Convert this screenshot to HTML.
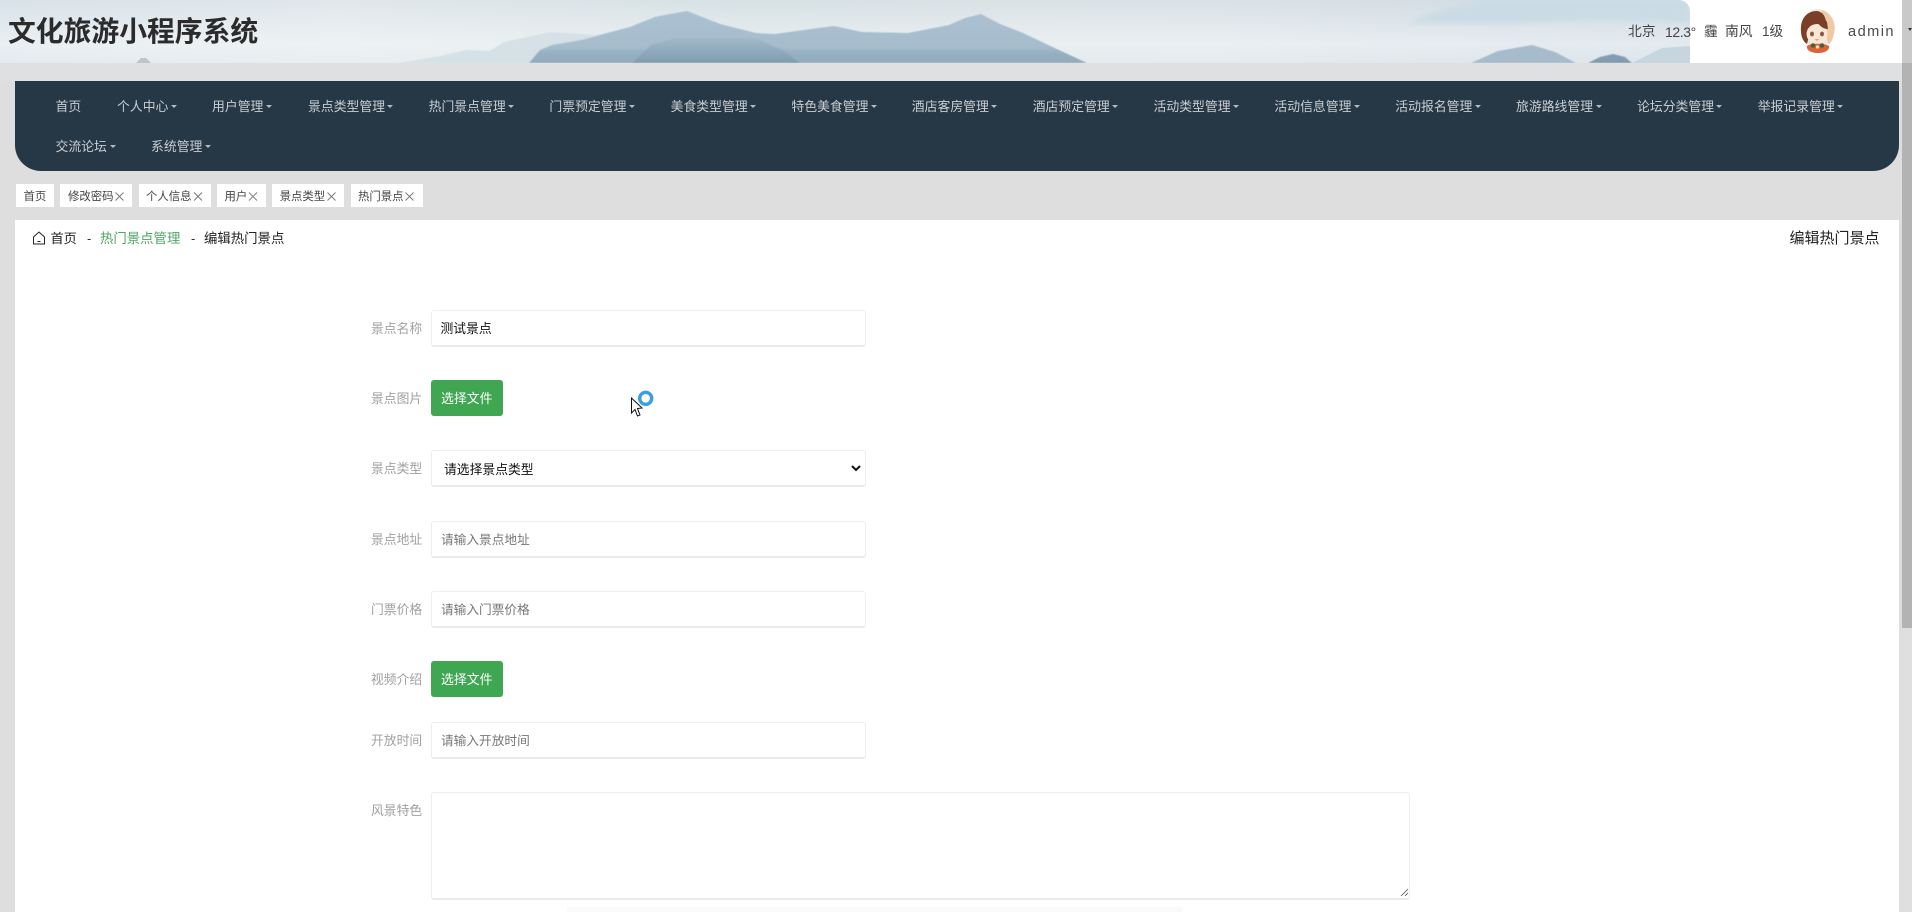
<!DOCTYPE html>
<html lang="zh-CN">
<head>
<meta charset="utf-8">
<title>文化旅游小程序系统</title>
<style>
html,body{margin:0;padding:0;width:1912px;height:912px;overflow:hidden;background:#dedede;font-family:"Liberation Sans","Noto Sans CJK SC",sans-serif;}
.a{position:absolute;white-space:nowrap;}
.t{position:absolute;white-space:nowrap;line-height:20px;height:20px;}
.n{color:#c8ced3;font-size:12.85px;top:97px;}
.r2{top:137px;}
.c{position:absolute;top:105px;width:0;height:0;border-left:3px solid transparent;border-right:3px solid transparent;border-top:3px solid #b4bbc1;}
.tab{position:absolute;top:184px;height:23px;background:#fff;}
.tt{color:#444;font-size:11.4px;top:187px;}
.lb{color:#a0a0a0;font-size:12.8px;left:371px;}
.in{position:absolute;left:431px;width:433px;height:34px;border:1px solid #eeeeee;border-bottom:2px solid #ebebeb;border-radius:3px;background:#fff;box-sizing:content-box;}
.ph{color:#777;font-size:12.7px;left:441px;}
.btn{position:absolute;left:431px;width:72px;height:36px;background:#3fa652;border-radius:3px;}
.bt{color:#fff;font-size:12.9px;left:441px;}
</style>
</head>
<body>
<div class="a" style="left:0;top:0;width:1912px;height:912px;background:#dedede;"></div>
<!-- banner -->
<svg class="a" style="left:0;top:0;" width="1690" height="63" viewBox="0 0 1690 63">
<defs>
<linearGradient id="bgv" x1="0" y1="0" x2="0" y2="1"><stop offset="0" stop-color="#fff" stop-opacity="0"/><stop offset="0.7" stop-color="#fff" stop-opacity="0.45"/><stop offset="1" stop-color="#fff" stop-opacity="0.3"/></linearGradient>
<linearGradient id="bgh" x1="0" y1="0" x2="1" y2="0"><stop offset="0" stop-color="#d8e2e9"/><stop offset="0.2" stop-color="#e0e7eb"/><stop offset="0.45" stop-color="#d6e1e4"/><stop offset="0.6" stop-color="#dae2e6"/><stop offset="0.72" stop-color="#d9e2e7"/><stop offset="0.85" stop-color="#d3dde4"/><stop offset="1" stop-color="#cddae3"/></linearGradient>
<linearGradient id="m1" x1="0" y1="0" x2="0" y2="1"><stop offset="0" stop-color="#abc0d0"/><stop offset="0.68" stop-color="#a6bdcd"/><stop offset="0.82" stop-color="#96afc0"/><stop offset="1" stop-color="#93acbe"/></linearGradient>
<linearGradient id="m2" x1="0" y1="0" x2="0" y2="1"><stop offset="0" stop-color="#a1bac9"/><stop offset="1" stop-color="#7f9cb0"/></linearGradient>
<filter id="b1"><feGaussianBlur stdDeviation="3"/></filter>
<filter id="b2"><feGaussianBlur stdDeviation="0.6"/></filter>
</defs>
<rect width="1690" height="63" fill="url(#bgh)"/>
<rect width="1690" height="63" fill="url(#bgv)"/>
<polygon points="1406,23 1440,10 1483,0 1690,0 1690,22 1600,20 1500,24" fill="#cbdbe5" filter="url(#b1)"/>
<polygon points="1632,63 1662,48 1690,46 1690,63" fill="#c7d5de"/>
<polygon points="136,63 141,58 146,58 151,63" fill="#b9c7cd"/>
<polygon points="400,63 440,56 467,50 490,51 504,42 550,32 596,35 640,25 640,63" fill="#d5e1e6" filter="url(#b2)"/>
<g filter="url(#b2)">
<polygon points="529,63 540,50 552,45 582,40 630,27 655,17 670,14 687,11 720,24 756,33 775,34 811,29 834,26 862,32 908,33 949,25 965,18 981,14 1000,24 1023,33 1059,50 1087,63" fill="url(#m1)"/>
<polygon points="632,63 651,45 674,38 756,38 782,50 800,63" fill="url(#m2)"/>
<polygon points="1471,63 1498,51 1532,45 1555,52 1576,63" fill="#a6bccd"/>
<polygon points="1588,63 1600,57 1613,54 1625,57 1632,63" fill="#839cb0"/>
</g>
</svg>
<!-- header right -->
<div class="a" style="left:1690px;top:0;width:212px;height:63px;background:#fff;"></div>
<svg class="a" style="left:1678px;top:0;" width="12" height="12"><path d="M2 0 Q12 2 12 12 L12 0Z" fill="#fff"/></svg>
<div class="a" style="left:0;top:63px;width:1902px;height:18px;background:#dfe0e2;"></div>
<div class="t" style="left:8px;top:12px;font-size:27.8px;line-height:40px;height:40px;font-weight:bold;color:#2b2b2b;">文化旅游小程序系统</div>
<div class="t" style="left:1628px;top:21.5px;font-size:13.8px;color:#444;">北京</div>
<div class="t" style="left:1665px;top:21.5px;font-size:14px;color:#444;letter-spacing:-.4px;">12.3°</div>
<div class="t" style="left:1704px;top:21.5px;font-size:13.6px;color:#444;">霾</div>
<div class="t" style="left:1725px;top:21.5px;font-size:13.8px;color:#444;">南风</div>
<div class="t" style="left:1762px;top:21.5px;font-size:13.6px;color:#444;">1级</div>
<svg class="a" style="left:1797px;top:8px;" width="42" height="46" viewBox="0 0 42 46">
<ellipse cx="21" cy="20" rx="17" ry="19" fill="#efe6dc"/>
<path d="M24 2 C34 5 39 14 37 25 C36 32 33 36 31 36 L28 18 Z" fill="#f0c8a4"/>
<path d="M20 3 C9 3 3 12 4 23 C4 30 7 34 10 36 L12 28 L30 19 C29 10 27 4 20 3Z" fill="#7a3f25"/>
<ellipse cx="20" cy="26" rx="10.500" ry="10" fill="#f9e6d5"/>
<path d="M9 25 C11 17 16 14 21 15 C23 18 26 21 31 21 L30 14 C26 8 12 8 9 18Z" fill="#7a3f25"/>
<ellipse cx="15" cy="26" rx="2" ry="2.400" fill="#8a5a44"/><ellipse cx="25" cy="26" rx="2" ry="2.400" fill="#8a5a44"/>
<path d="M18.500 31.500 q1.500 1 3 0" stroke="#c46c50" fill="none" stroke-width=".8"/>
<path d="M10 38 C13 35 28 35 32 38 C33 42 28 45 21 45 C14 45 9 42 10 38Z" fill="#dc6238"/>
<circle cx="16" cy="37.500" r="2.300" fill="#48603f"/><circle cx="25" cy="37.500" r="2.300" fill="#48603f"/>
<circle cx="20.500" cy="39" r="1.600" fill="#f2e4c8"/>
</svg>
<div class="t" style="left:1848px;top:21.5px;font-size:14.6px;color:#4a4a4a;letter-spacing:1.450px;">admin</div>
<!-- nav -->
<div class="a" style="left:15px;top:81px;width:1884px;height:90px;background:#263745;border-radius:0 0 26px 26px;"></div>
<div class="t n" style="left:55.500px;">首页</div>
<div class="t n" style="left:117px;">个人中心</div><i class="c" style="left:170.500px;"></i>
<div class="t n" style="left:212px;">用户管理</div><i class="c" style="left:265.500px;"></i>
<div class="t n" style="left:308px;">景点类型管理</div><i class="c" style="left:387px;"></i>
<div class="t n" style="left:428.600px;">热门景点管理</div><i class="c" style="left:508px;"></i>
<div class="t n" style="left:549.400px;">门票预定管理</div><i class="c" style="left:629px;"></i>
<div class="t n" style="left:670.600px;">美食类型管理</div><i class="c" style="left:750px;"></i>
<div class="t n" style="left:791.400px;">特色美食管理</div><i class="c" style="left:871px;"></i>
<div class="t n" style="left:911.800px;">酒店客房管理</div><i class="c" style="left:991px;"></i>
<div class="t n" style="left:1032.700px;">酒店预定管理</div><i class="c" style="left:1112px;"></i>
<div class="t n" style="left:1153.500px;">活动类型管理</div><i class="c" style="left:1233px;"></i>
<div class="t n" style="left:1274.400px;">活动信息管理</div><i class="c" style="left:1354px;"></i>
<div class="t n" style="left:1395.300px;">活动报名管理</div><i class="c" style="left:1475px;"></i>
<div class="t n" style="left:1516px;">旅游路线管理</div><i class="c" style="left:1596px;"></i>
<div class="t n" style="left:1637px;">论坛分类管理</div><i class="c" style="left:1716px;"></i>
<div class="t n" style="left:1757.700px;">举报记录管理</div><i class="c" style="left:1837px;"></i>
<div class="t n r2" style="left:55.500px;">交流论坛</div><i class="c" style="left:109.500px;top:145px;"></i>
<div class="t n r2" style="left:151px;">系统管理</div><i class="c" style="left:205px;top:145px;"></i>
<!-- tabs -->
<div class="tab" style="left:15.500px;width:38.500px;"></div>
<div class="tab" style="left:60px;width:72px;"></div>
<div class="tab" style="left:139px;width:72px;"></div>
<div class="tab" style="left:217px;width:49px;"></div>
<div class="tab" style="left:272px;width:72px;"></div>
<div class="tab" style="left:351px;width:72px;"></div>
<div class="t tt" style="left:23.500px;">首页</div>
<div class="t tt" style="left:68px;">修改密码</div>
<div class="t tt" style="left:146px;">个人信息</div>
<div class="t tt" style="left:224.500px;">用户</div>
<div class="t tt" style="left:279.600px;">景点类型</div>
<div class="t tt" style="left:358px;">热门景点</div>
<svg class="a" style="left:0;top:190px;" width="430" height="12" fill="none" stroke="#777" stroke-width="0.9">
<path d="M115.500 2.500 L123.500 10.500 M123.500 2.500 L115.500 10.500"/>
<path d="M194 2.500 L202 10.500 M202 2.500 L194 10.500"/>
<path d="M249 2.500 L257 10.500 M257 2.500 L249 10.500"/>
<path d="M327.500 2.500 L335.500 10.500 M335.500 2.500 L327.500 10.500"/>
<path d="M405.500 2.500 L413.500 10.500 M413.500 2.500 L405.500 10.500"/>
</svg>
<!-- card -->
<div class="a" style="left:15px;top:220px;width:1884px;height:692px;background:#fff;"></div>
<svg class="a" style="left:32px;top:231px;" width="14" height="14" viewBox="0 0 14 14" fill="none" stroke="#222" stroke-width="1"><path d="M1.500 6 L7 1 L12.500 6 V13 H1.500Z"/><path d="M5.500 10.500 H8.500"/></svg>
<div class="t" style="left:50.500px;top:229px;font-size:13.2px;color:#222;">首页</div>
<div class="t" style="left:87px;top:229px;font-size:13px;color:#333;">-</div>
<div class="t" style="left:100px;top:229px;font-size:13.400px;color:#4fa562;">热门景点管理</div>
<div class="t" style="left:191px;top:229px;font-size:13px;color:#333;">-</div>
<div class="t" style="left:204px;top:229px;font-size:13.400px;color:#222;">编辑热门景点</div>
<div class="t" style="left:1789.500px;top:229px;font-size:15px;color:#222;">编辑热门景点</div>
<!-- form -->
<div class="t lb" style="top:319px;">景点名称</div>
<div class="in" style="top:310px;"></div>
<div class="t" style="left:440.500px;top:319px;font-size:12.800px;color:#111;">测试景点</div>
<div class="t lb" style="top:389px;">景点图片</div>
<div class="btn" style="top:380px;"></div>
<div class="t bt" style="top:389px;">选择文件</div>
<div class="t lb" style="top:459px;">景点类型</div>
<div class="in" style="top:450px;"></div>
<div class="t" style="left:444px;top:459.500px;font-size:12.800px;color:#111;">请选择景点类型</div>
<svg class="a" style="left:851px;top:465px;" width="10" height="7" fill="none" stroke="#111" stroke-width="2"><path d="M1 1 L5 5 L9 1"/></svg>
<div class="t lb" style="top:530px;">景点地址</div>
<div class="in" style="top:521px;"></div>
<div class="t ph" style="top:530px;">请输入景点地址</div>
<div class="t lb" style="top:600px;">门票价格</div>
<div class="in" style="top:591px;"></div>
<div class="t ph" style="top:600px;">请输入门票价格</div>
<div class="t lb" style="top:670px;">视频介绍</div>
<div class="btn" style="top:661px;"></div>
<div class="t bt" style="top:670px;">选择文件</div>
<div class="t lb" style="top:730.500px;">开放时间</div>
<div class="in" style="top:722px;"></div>
<div class="t ph" style="top:730.500px;">请输入开放时间</div>
<div class="t lb" style="top:800.500px;">风景特色</div>
<div class="in" style="top:792px;width:977px;height:105px;"></div>
<svg class="a" style="left:1400px;top:888px;" width="9" height="9" stroke="#555" stroke-width="0.8" fill="none"><path d="M1 8 L8 1 M5 8 L8 5"/></svg>
<div class="a" style="left:567px;top:907px;width:615px;height:5px;background:#fafafa;"></div>
<!-- busy cursor -->
<svg class="a" style="left:628px;top:388px;" width="30" height="32" viewBox="0 0 30 32">
<circle cx="17.700" cy="10.300" r="6" fill="none" stroke="#3a9ee4" stroke-width="3.400"/>
<path d="M3.500 10 V25 L7 21.500 L9.500 28 L12 27 L9.500 20.500 L14 20 Z" fill="#fff" stroke="#111" stroke-width="1"/>
</svg>
<!-- scrollbar -->
<div class="a" style="left:1902px;top:0;width:10px;height:63px;background:#c9c9c9;"></div>
<div class="a" style="left:1902px;top:63px;width:10px;height:565px;background:#b3b3b3;"></div>
<div class="a" style="left:1902px;top:628px;width:10px;height:284px;background:#dfdfdf;"></div>
<div class="a" style="left:1908px;top:28px;width:0;height:0;border-left:2.500px solid transparent;border-right:2.500px solid transparent;border-top:3px solid #333;"></div>
</body>
</html>
